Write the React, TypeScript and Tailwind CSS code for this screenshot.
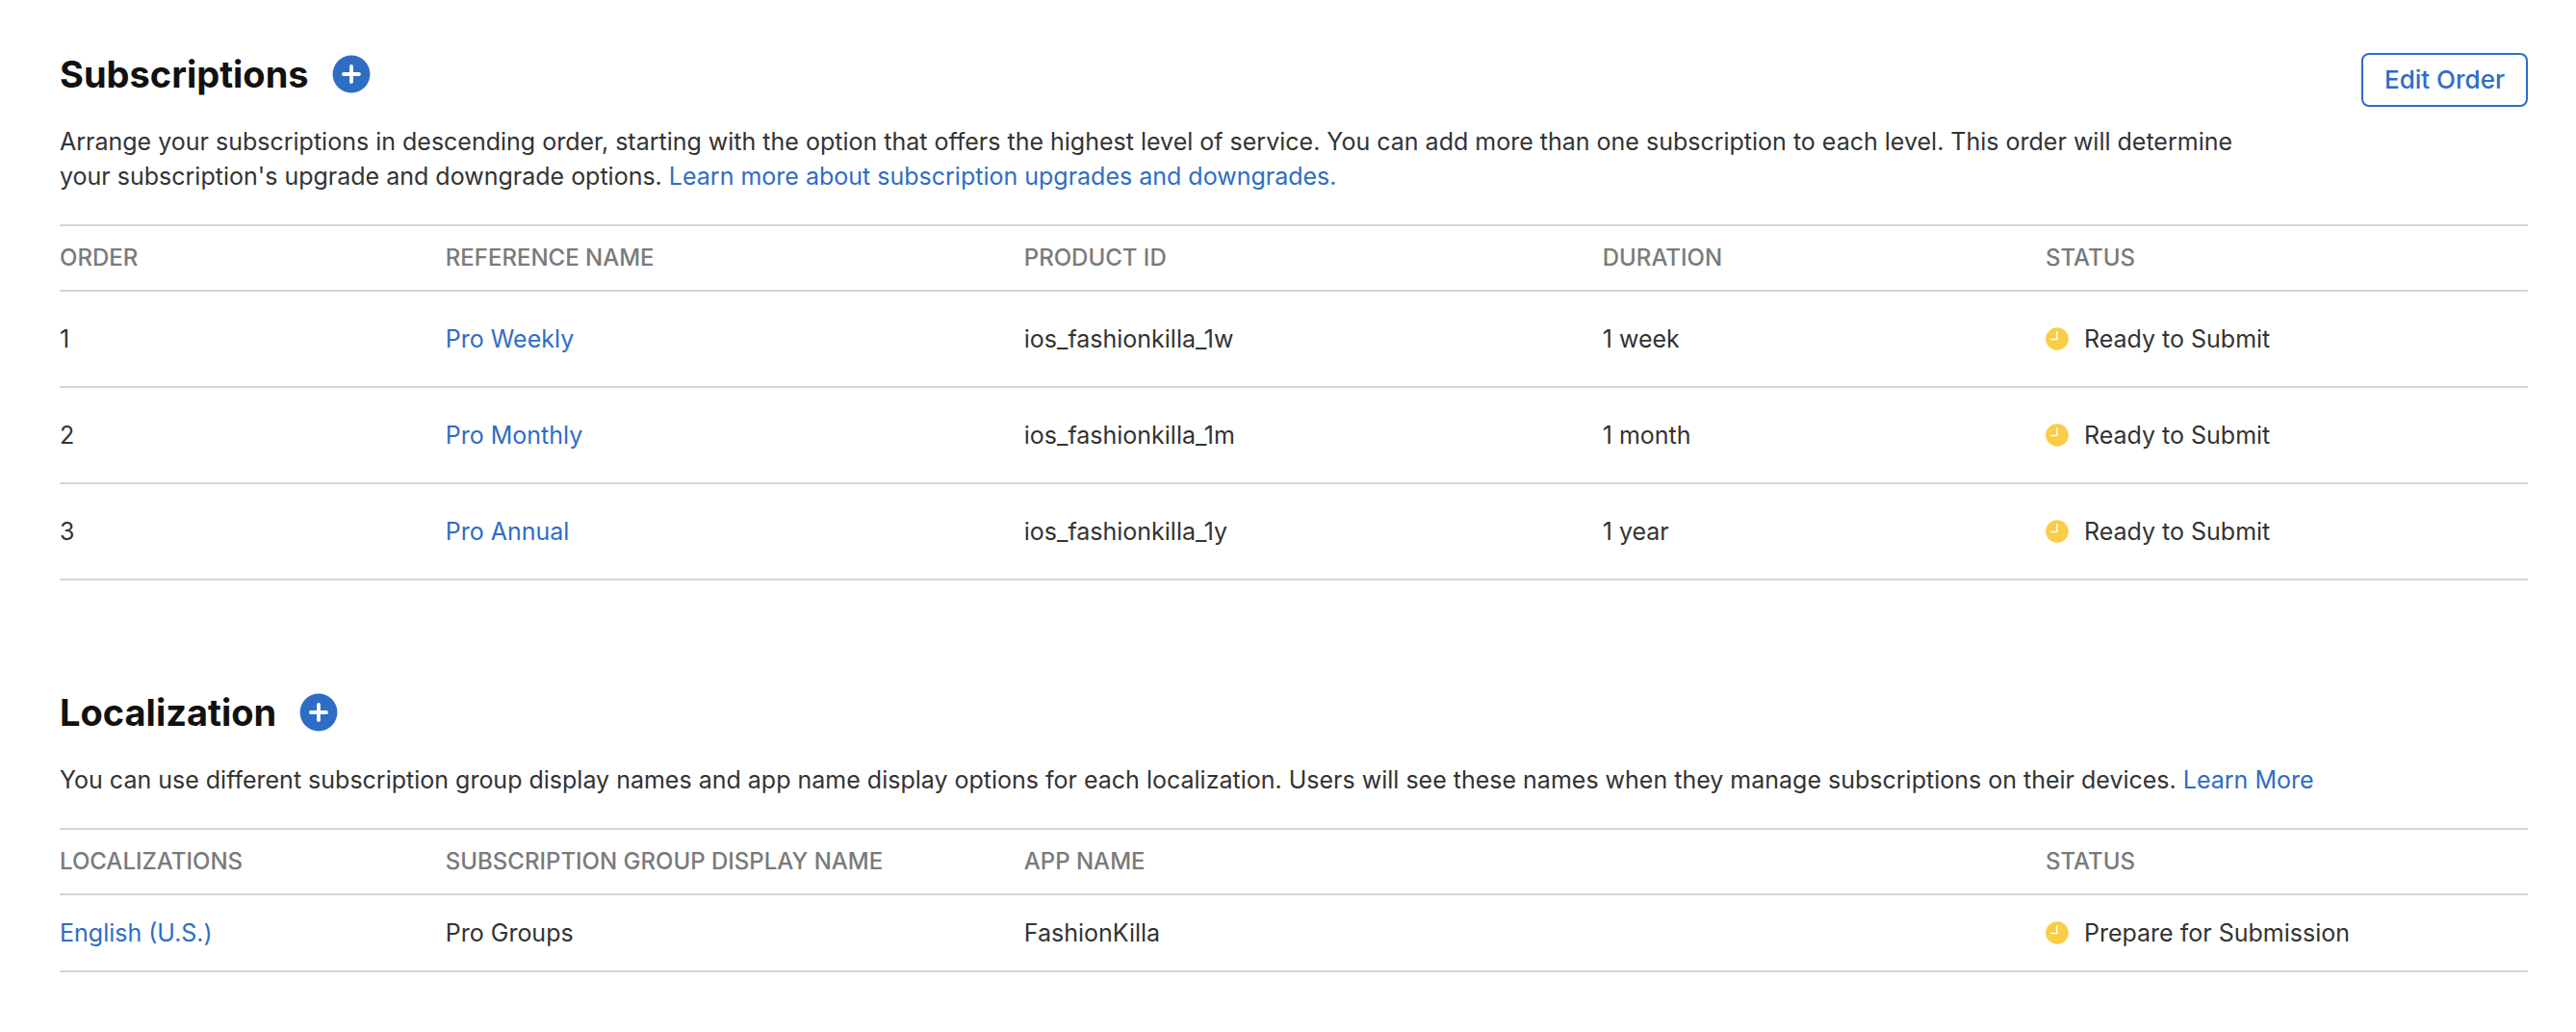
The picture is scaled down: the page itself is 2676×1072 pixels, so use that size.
import type { ReactNode } from "react";

type Subscription = { order: number; name: string; productId: string; duration: string; status: string };
type Localization = { language: string; displayName: string; appName: string; status: string };

const subscriptions: Subscription[] = [
  { order: 1, name: "Pro Weekly", productId: "ios_fashionkilla_1w", duration: "1 week", status: "Ready to Submit" },
  { order: 2, name: "Pro Monthly", productId: "ios_fashionkilla_1m", duration: "1 month", status: "Ready to Submit" },
  { order: 3, name: "Pro Annual", productId: "ios_fashionkilla_1y", duration: "1 year", status: "Ready to Submit" },
];

const localizations: Localization[] = [
  { language: "English (U.S.)", displayName: "Pro Groups", appName: "FashionKilla", status: "Prepare for Submission" },
];

function Link({ children }: { children: ReactNode }) {
  return (
    <a href="#" className="text-[#2e6dc6] hover:underline">
      {children}
    </a>
  );
}

function SectionTitle({ title, addLabel }: { title: string; addLabel: string }) {
  return (
    <div className="flex items-center gap-6">
      <h2 className="text-[38px] leading-12 font-bold text-[#111]">{title}</h2>
      <button type="button" aria-label={addLabel} className="cursor-pointer">
        <svg viewBox="0 0 40 40" className="size-10" aria-hidden="true">
          <circle cx="20" cy="20" r="19.4" fill="#2e6dc6" />
          <path d="M20 12v16M12 20h16" stroke="#fff" strokeWidth="3.8" strokeLinecap="round" />
        </svg>
      </button>
    </div>
  );
}

function Status({ children }: { children: ReactNode }) {
  return (
    <span className="flex items-center gap-4">
      <svg viewBox="0 0 24 24" className="size-6 shrink-0" aria-hidden="true">
        <circle cx="12" cy="12" r="11.8" fill="#f9ce46" />
        <path d="M11.7 4.8v7.6H5.6" fill="none" stroke="#fff" strokeWidth="1.5" strokeLinecap="round" strokeLinejoin="round" />
      </svg>
      {children}
    </span>
  );
}

function HeaderCell({ children, span }: { children: ReactNode; span?: number }) {
  return (
    <th scope="col" colSpan={span} className="h-[68px] text-[24px] leading-8 font-medium text-[#7a7a7a]">
      {children}
    </th>
  );
}

function Columns() {
  return (
    <colgroup>
      <col className="w-[15.63%]" />
      <col className="w-[23.44%]" />
      <col className="w-[23.44%]" />
      <col className="w-[17.95%]" />
      <col />
    </colgroup>
  );
}

export default function App() {
  return (
    <main className="min-h-screen bg-white pr-[50px] pl-[62px] pt-[53px] pb-16 font-['Inter',sans-serif] text-[25px] leading-9 text-[#333]">
      <section aria-label="Subscriptions">
        <div className="flex items-start justify-between gap-22">
          <div>
            <SectionTitle title="Subscriptions" addLabel="Add subscription" />
            <p className="mt-7">
              Arrange your subscriptions in descending order, starting with the option that offers the highest level of
              service. You can add more than one subscription to each level. This order will determine your
              subscription's upgrade and downgrade options.{" "}
              <Link>Learn more about subscription upgrades and downgrades.</Link>
            </p>
          </div>
          <button
            type="button"
            className="mt-0.5 h-14 shrink-0 cursor-pointer rounded-lg border-2 border-[#2e6dc6] px-[22px] text-[26px] font-medium text-[#2e6dc6]"
          >
            Edit Order
          </button>
        </div>
        <table className="mt-8 w-full table-fixed border-collapse text-left">
          <Columns />
          <thead>
            <tr className="border-y-2 border-[#d6d6d6]">
              <HeaderCell>ORDER</HeaderCell>
              <HeaderCell>REFERENCE NAME</HeaderCell>
              <HeaderCell>PRODUCT ID</HeaderCell>
              <HeaderCell>DURATION</HeaderCell>
              <HeaderCell>STATUS</HeaderCell>
            </tr>
          </thead>
          <tbody>
            {subscriptions.map((row) => (
              <tr key={row.order} className="border-b-2 border-[#d6d6d6]">
                <td className="h-[100px]">{row.order}</td>
                <td>
                  <Link>{row.name}</Link>
                </td>
                <td>{row.productId}</td>
                <td>{row.duration}</td>
                <td>
                  <Status>{row.status}</Status>
                </td>
              </tr>
            ))}
          </tbody>
        </table>
      </section>

      <section aria-label="Localization" className="mt-[113px]">
        <SectionTitle title="Localization" addLabel="Add localization" />
        <p className="mt-7">
          You can use different subscription group display names and app name display options for each localization.
          Users will see these names when they manage subscriptions on their devices. <Link>Learn More</Link>
        </p>
        <table className="mt-8 w-full table-fixed border-collapse text-left">
          <Columns />
          <thead>
            <tr className="border-y-2 border-[#d6d6d6]">
              <HeaderCell>LOCALIZATIONS</HeaderCell>
              <HeaderCell>SUBSCRIPTION GROUP DISPLAY NAME</HeaderCell>
              <HeaderCell span={2}>APP NAME</HeaderCell>
              <HeaderCell>STATUS</HeaderCell>
            </tr>
          </thead>
          <tbody>
            {localizations.map((row) => (
              <tr key={row.language} className="border-b-2 border-[#d6d6d6]">
                <td className="h-20">
                  <Link>{row.language}</Link>
                </td>
                <td>{row.displayName}</td>
                <td colSpan={2}>{row.appName}</td>
                <td>
                  <Status>{row.status}</Status>
                </td>
              </tr>
            ))}
          </tbody>
        </table>
      </section>
    </main>
  );
}
